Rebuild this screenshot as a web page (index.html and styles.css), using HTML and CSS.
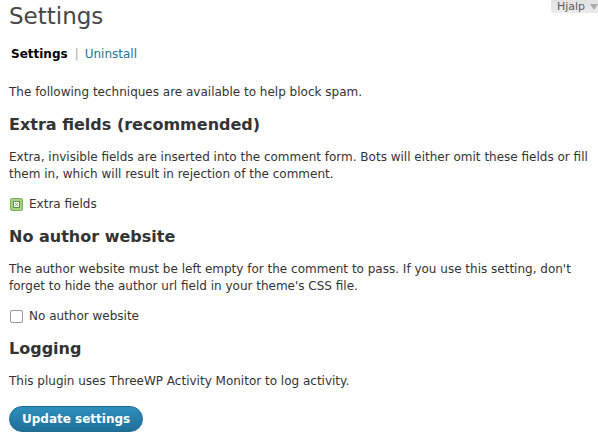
FILE: index.html
```html
<!DOCTYPE html>
<html>
<head>
<meta charset="utf-8">
<link rel="stylesheet" href="styles.css">
</head>
<body>
<div class="help-bar"><span class="help-tab">Hjalp<span class="help-arrow"></span></span></div>
<div class="wrap">
  <h2 class="title">Settings</h2>
  <div class="subnav"><span class="current">Settings</span><span class="sep">|</span><a class="link" href="#">Uninstall</a></div>
  <p class="text intro">The following techniques are available to help block spam.</p>
  <h3 class="section">Extra fields (recommended)</h3>
  <p class="text">Extra, invisible fields are inserted into the comment form. Bots will either omit these fields or fill them in, which will result in rejection of the comment.</p>
  <label class="check"><span class="box checked"><svg class="mark" width="7" height="7" viewBox="0 0 7 7"><rect x="0.5" y="0.5" width="6" height="6" fill="#fff" stroke="#5f8f3e"/><path d="M2 2l3 3M5 2l-3 3" stroke="#7fae5c" stroke-width="1"/></svg></span>Extra fields</label>
  <h3 class="section">No author website</h3>
  <p class="text">The author website must be left empty for the comment to pass. If you use this setting, don't forget to hide the author url field in your theme's CSS file.</p>
  <label class="check"><span class="box"></span>No author website</label>
  <h3 class="section">Logging</h3>
  <p class="text">This plugin uses ThreeWP Activity Monitor to log activity.</p>
  <button class="btn">Update settings</button>
</div>
</body>
</html>
```
FILE: styles.css
```css
html, body { margin: 0; padding: 0; background: #fff; }
body { font-family: "DejaVu Sans", sans-serif; color: #333; font-size: 12px; }
.help-bar { position: absolute; top: 0; left: 551px; }
.help-tab { display: flex; align-items: center; width: 60px; box-sizing: border-box; padding: 0 0 0 6px; height: 13px; font-size: 11px; color: #5a5a5a; background: linear-gradient(#e2e2e2, #ececec); border-radius: 0 0 3px 3px; }
.help-arrow { margin-left: 5px; width: 0; height: 0; border-left: 4px solid transparent; border-right: 4px solid transparent; border-top: 6px solid #aaa; }
.wrap { padding: 0 10px 0 9px; }
.title { margin: 0; padding-top: 1px; font-size: 23px; font-weight: normal; color: #464646; line-height: 30px; }
.subnav { margin-top: 14px; font-size: 12px; line-height: 18px; padding-left: 2px; }
.current { font-weight: bold; color: #000; }
.sep { color: #aaa; margin: 0 6px 0 7px; }
.link { color: #21759b; text-decoration: none; }
.text { margin: 0; line-height: 17px; }
.intro { margin-top: 21px; }
.section { margin: 12px 0 0; font-size: 16px; font-weight: bold; color: #333; line-height: 24px; }
.section + .text { margin-top: 12px; }
.check { display: flex; align-items: center; margin-top: 13px; line-height: 17px; }
.box { width: 11px; height: 11px; border: 1px solid #999; border-radius: 2px; margin: 0 6px 0 1px; background: #fff; display: flex; align-items: center; justify-content: center; }
.box.checked { background: #a6d184; border-color: #7fae5c; }
.mark { display: block; }
.btn { display: block; margin-top: 16px; font-family: "DejaVu Sans", sans-serif; font-size: 12px; font-weight: bold; color: #fff; background: linear-gradient(#2e8fbd, #1f6f98); border: 1px solid #1e6a91; border-radius: 13px; padding: 0 12px; height: 26px; line-height: 24px; cursor: pointer; }
```
